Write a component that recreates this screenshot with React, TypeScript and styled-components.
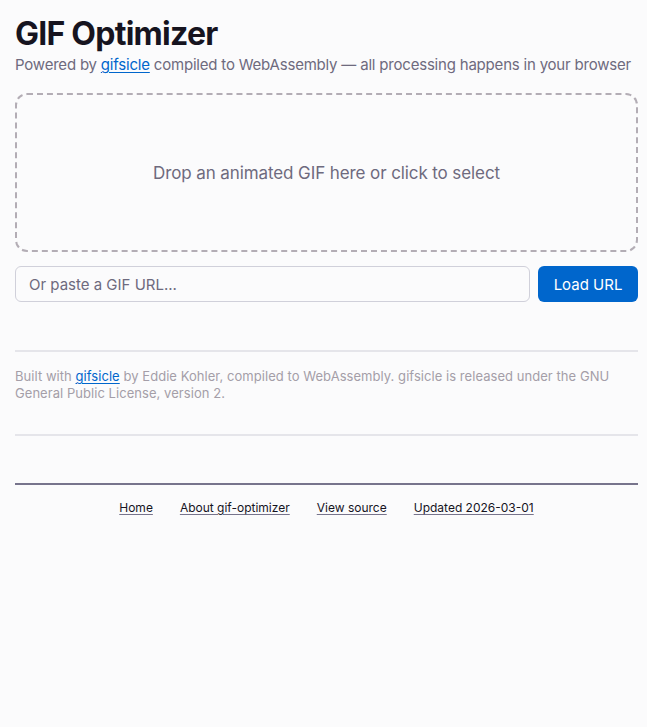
import React, { useState } from 'react';
import styled, { createGlobalStyle } from 'styled-components';

const GlobalStyle = createGlobalStyle`
  html, body {
    margin: 0;
    background: #fbfbfc;
  }
  body {
    font-family: Inter, "Noto Sans", sans-serif;
    color: #1a1a2b;
  }
`

const Page = styled.div`
  padding: 16px 9px 0 15px;
`

const Title = styled.h1`
  margin: 0;
  font-size: 32px;
  font-weight: 700;
  line-height: 36px;
  letter-spacing: -0.75px;
  color: #16141f;
`

const Subtitle = styled.p`
  margin: 2px 0 0;
  font-size: 15px;
  line-height: 22px;
  letter-spacing: -0.2px;
  color: #6e6a7e;
`

const Link = styled.a`
  color: #0066cc;
  text-decoration: underline;
  text-decoration-thickness: 1px;
  text-underline-offset: 2px;
`

const DropZone = styled.div`
  margin-top: 17px;
  height: 159px;
  box-sizing: border-box;
  border: 2px dashed #b3adb5;
  border-radius: 12px;
  display: flex;
  align-items: center;
  justify-content: center;
  font-size: 17px;
  letter-spacing: -0.1px;
  color: #6e6a7e;
  cursor: pointer;
`

const UrlRow = styled.div`
  margin-top: 14px;
  display: flex;
  gap: 8px;
`

const UrlInput = styled.input`
  flex: 1;
  height: 36px;
  box-sizing: border-box;
  padding: 0 13px;
  border: 1px solid #d0d0da;
  border-radius: 6px;
  background: #fbfbfc;
  font-family: inherit;
  font-size: 15px;
  color: #1a1a2b;
  &::placeholder {
    color: #6e6a7e;
  }
`

const LoadButton = styled.button`
  width: 100px;
  height: 36px;
  border: none;
  border-radius: 6px;
  background: #0066cc;
  color: #fff;
  font-family: inherit;
  font-size: 15px;
  cursor: pointer;
`

const Divider = styled.hr<{ $top: number }>`
  margin: ${p => p.$top}px 0 0;
  border: none;
  border-top: 2px solid #e5e5ea;
`

const Credits = styled.p`
  margin: 16px 0 0;
  font-size: 13px;
  line-height: 17px;
  letter-spacing: 0.05px;
  color: #a49ea8;
`

const Footer = styled.footer`
  margin-top: 47px;
  border-top: 2px solid #77748c;
  padding-top: 15px;
  display: flex;
  justify-content: center;
  gap: 27px;
  font-size: 12px;
`

const FooterLink = styled.a`
  color: #16141f;
  text-decoration: underline;
  text-underline-offset: 2px;
  text-decoration-color: #77748c;
`

const App = () => {
  const [url, setUrl] = useState('');

  return (
    <>
      <GlobalStyle />
      <Page>
        <Title>GIF Optimizer</Title>
        <Subtitle>
          Powered by <Link href="#">gifsicle</Link> compiled to WebAssembly — all processing happens in your browser
        </Subtitle>
        <DropZone>Drop an animated GIF here or click to select</DropZone>
        <UrlRow>
          <UrlInput
            placeholder="Or paste a GIF URL..."
            value={url}
            onChange={e => setUrl(e.target.value)}
          />
          <LoadButton>Load URL</LoadButton>
        </UrlRow>
        <Divider $top={48} />
        <Credits>
          Built with <Link href="#">gifsicle</Link> by Eddie Kohler, compiled to WebAssembly. gifsicle is released under the GNU General Public License, version 2.
        </Credits>
        <Divider $top={32} />
        <Footer>
          <FooterLink href="#">Home</FooterLink>
          <FooterLink href="#">About gif-optimizer</FooterLink>
          <FooterLink href="#">View source</FooterLink>
          <FooterLink href="#">Updated 2026-03-01</FooterLink>
        </Footer>
      </Page>
    </>
  );
}

export default App;
